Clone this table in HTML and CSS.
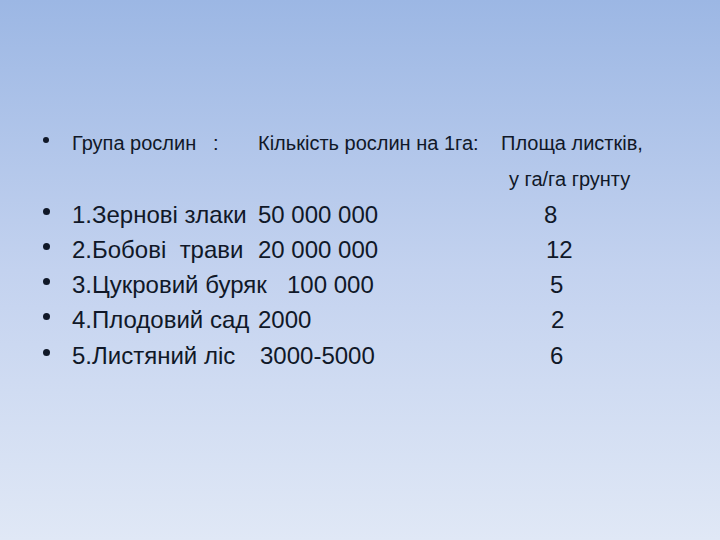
FILE: index.html
```html
<!DOCTYPE html>
<html lang="uk">
<head>
<meta charset="utf-8">
<title>Площа листків</title>
<link rel="stylesheet" href="styles.css">
</head>
<body>
<div class="slide">
  <div class="head">
    <div class="cell"><span class="dot dot-s"></span></div>
    <div class="cell pre">Група рослин   :</div>
    <div class="cell">Кількість рослин на 1га:</div>
    <div class="cell">Площа листків,</div>
    <div class="cell"></div>
    <div class="cell"></div>
    <div class="cell"></div>
    <div class="cell sub">у га/га грунту</div>
  </div>
  <div class="list">
    <div class="cell"><span class="dot"></span></div>
    <div class="cell">1.Зернові злаки</div>
    <div class="cell">50 000 000</div>
    <div class="cell">8</div>

    <div class="cell"><span class="dot"></span></div>
    <div class="cell pre">2.Бобові  трави</div>
    <div class="cell">20 000 000</div>
    <div class="cell p2">12</div>

    <div class="cell"><span class="dot"></span></div>
    <div class="cell">3.Цукровий буряк</div>
    <div class="cell p29">100 000</div>
    <div class="cell p6">5</div>

    <div class="cell"><span class="dot"></span></div>
    <div class="cell">4.Плодовий сад</div>
    <div class="cell">2000</div>
    <div class="cell p7">2</div>

    <div class="cell"><span class="dot"></span></div>
    <div class="cell">5.Листяний ліс</div>
    <div class="cell p2">3000-5000</div>
    <div class="cell p6">6</div>
  </div>
</div>
</body>
</html>
```
FILE: styles.css
```css
html, body {
  margin: 0;
  padding: 0;
}
body {
  width: 720px;
  height: 540px;
  overflow: hidden;
  background: linear-gradient(180deg, #9cb7e4 0%, #c3d2ef 50%, #e0e8f6 100%);
  font-family: "Liberation Sans", Arial, sans-serif;
  color: #101828;
}
.slide {
  padding-top: 124.6px;
}
.head {
  display: grid;
  grid-template-columns: 72px 186px 243px 1fr;
  font-size: 20px;
  line-height: 36px;
}
.list {
  display: grid;
  grid-template-columns: 72px 186px 286px 1fr;
  font-size: 24px;
  line-height: 35.25px;
}
.cell {
  white-space: nowrap;
}
.pre {
  white-space: pre;
}
.sub {
  padding-left: 8px;
}
.dot {
  display: inline-block;
  width: 7px;
  height: 7px;
  border-radius: 50%;
  background: #101828;
  margin-left: 43px;
  margin-bottom: 8px;
  vertical-align: baseline;
}
.dot-s {
  width: 6px;
  height: 6px;
  margin-bottom: 7px;
}
.p2 { padding-left: 2px; }
.p6 { padding-left: 6px; }
.p7 { padding-left: 7px; }
.p29 { padding-left: 29px; }
```
